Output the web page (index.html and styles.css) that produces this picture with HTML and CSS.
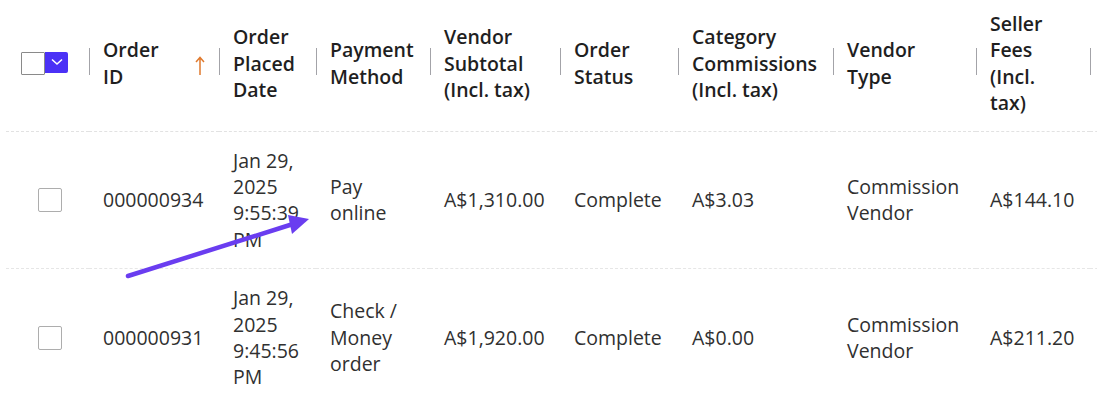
FILE: index.html
```html
<!DOCTYPE html>
<html>

<head>
	<link rel="stylesheet" href="styles.css">
</head>

<body>
	<table id="orders-grid">
		<colgroup>
			<col class="col-select">
			<col class="col-id">
			<col class="col-date">
			<col class="col-payment">
			<col class="col-subtotal">
			<col class="col-status">
			<col class="col-commission">
			<col class="col-vendor-type">
			<col class="col-fees">
			<col class="col-rest">
		</colgroup>
		<thead>
			<tr>
				<th class="select-cell">
					<div class="mass-select">
						<span class="checkbox"></span>
						<button class="mass-toggle">
							<svg width="12" height="8" viewBox="0 0 12 8">
								<path d="M1 1.5 L6 6 L11 1.5" fill="none" stroke="#fff" stroke-width="1.6" />
							</svg>
						</button>
					</div>
				</th>
				<th class="sortable">
					<div class="sort-wrap">
						<span class="label">Order ID</span>
						<svg class="sort-arrow" width="10" height="20" viewBox="0 0 10 20">
							<path d="M5 19 V2 M1 6 L5 1.5 L9 6" fill="none" stroke="#e07a2e" stroke-width="1.5" />
						</svg>
					</div>
				</th>
				<th>Order Placed Date</th>
				<th>Payment Method</th>
				<th>Vendor Subtotal (Incl. tax)</th>
				<th>Order Status</th>
				<th>Category Commissions (Incl. tax)</th>
				<th class="narrow">Vendor Type</th>
				<th class="narrow">Seller Fees (Incl. tax)</th>
				<th></th>
			</tr>
		</thead>
		<tbody>
			<tr>
				<td class="select-cell"><span class="checkbox"></span></td>
				<td>000000934</td>
				<td>Jan 29, 2025 9:55:39 PM</td>
				<td>Pay online</td>
				<td>A$1,310.00</td>
				<td>Complete</td>
				<td>A$3.03</td>
				<td>Commission Vendor</td>
				<td>A$144.10</td>
				<td></td>
			</tr>
			<tr>
				<td class="select-cell"><span class="checkbox"></span></td>
				<td>000000931</td>
				<td>Jan 29, 2025 9:45:56 PM</td>
				<td>Check / Money order</td>
				<td>A$1,920.00</td>
				<td>Complete</td>
				<td>A$0.00</td>
				<td>Commission Vendor</td>
				<td>A$211.20</td>
				<td></td>
			</tr>
		</tbody>
	</table>

	<!-- pointer drawn over the grid -->
	<svg class="callout" width="1097" height="395" viewBox="0 0 1097 395">
		<line x1="128" y1="276" x2="293" y2="224" stroke="#6a3df0" stroke-width="4.5" stroke-linecap="round" />
		<polygon points="309,219 288,215 292,234" fill="#6a3df0" />
	</svg>
</body>

</html>
```

FILE: styles.css
```css
body {
	margin: 0;
	overflow: hidden;
	background: #fff;
	font-family: "Open Sans", "Liberation Sans", sans-serif;
	font-size: 19.5px;
	line-height: 26.4px;
	color: #303030;
}

#orders-grid {
	margin-left: 6px;
	border-collapse: collapse;
	table-layout: fixed;
	width: 1134px;
	font: inherit;
}

.col-select { width: 83px; }
.col-id { width: 130px; }
.col-date { width: 97px; }
.col-payment { width: 114px; }
.col-subtotal { width: 130px; }
.col-status { width: 118px; }
.col-commission { width: 155px; }
.col-vendor-type { width: 143px; }
.col-fees { width: 114px; }
.col-rest { width: 50px; }

#orders-grid th {
	position: relative;
	text-align: left;
	font-weight: 600;
	color: #1f1f1f;
	vertical-align: middle;
	padding: 11px 10px 14px 14px;
	border-bottom: 1px dashed #e2e2e2;
}

/* column separators */
#orders-grid th + th::before {
	content: "";
	position: absolute;
	left: 0;
	top: calc(50% - 17px);
	height: 27px;
	width: 1px;
	background: #a3a3a8;
}

#orders-grid th.narrow {
	padding-right: 20px;
}

#orders-grid td {
	vertical-align: middle;
	padding: 16px 10px 15px 14px;
	border-bottom: 1px dashed #e6e6e6;
}

#orders-grid th.select-cell {
	padding-left: 15px;
	padding-right: 0;
}

#orders-grid td.select-cell {
	padding-left: 32px;
	padding-right: 0;
}

.checkbox {
	display: block;
	box-sizing: border-box;
	width: 24px;
	height: 24px;
	border: 1px solid #adadad;
	border-radius: 2px;
	background: #fff;
}

.mass-select {
	display: flex;
	align-items: flex-start;
	margin-top: -1px;
}

.mass-select .checkbox {
	width: 24px;
	height: 23px;
	border-color: #8a8a8a;
	border-radius: 1px;
}

.mass-toggle {
	display: flex;
	align-items: center;
	justify-content: center;
	width: 23px;
	height: 21px;
	padding: 0;
	border: 0;
	border-radius: 0 2px 2px 0;
	background: #4b31f6;
}

.sort-wrap {
	display: flex;
	align-items: center;
	justify-content: space-between;
	padding-right: 4px;
}

.sort-wrap .label {
	max-width: 70px;
}

.sort-arrow {
	margin-top: 4px;
}

.callout {
	position: absolute;
	left: 0;
	top: 0;
	pointer-events: none;
}
```
